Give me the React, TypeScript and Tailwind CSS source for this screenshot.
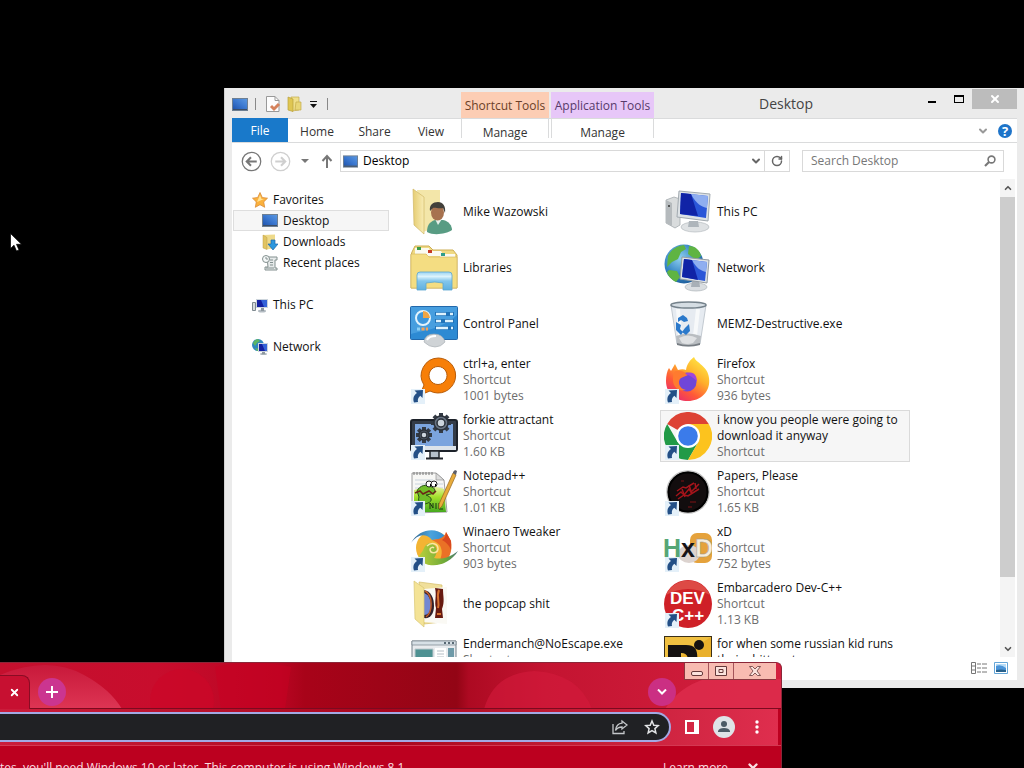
import React from 'react';
import { ChevronDown, RotateCw, X } from 'lucide-react';

type IconProps = { className?: string };

const ShortcutArrow = () => (
  <g>
    <rect x="1" y="33" width="14" height="15" fill="#e4f0f9" />
    <path d="M4 46.500c-1.500-4.500 0-7.500 3-9.500l-2.500-2.500L13 34l-.500 8-2.200-2.300C8 41.500 7.500 43.500 8 46z" fill="#234f86" />
  </g>
);

const MonitorIcon = ({ className }: IconProps) => (
  <svg viewBox="0 0 16 13" className={className} aria-hidden="true">
    <defs>
      <linearGradient id="screen" x1="0" y1="1" x2="1" y2="0">
        <stop offset="0" stopColor="#2055ae" />
        <stop offset=".5" stopColor="#3b78d0" />
        <stop offset="1" stopColor="#5a97e0" />
      </linearGradient>
    </defs>
    <rect x="0" y="0" width="16" height="13" fill="#6d7f92" />
    <rect x="1" y="1" width="14" height="10" fill="url(#screen)" />
    <path d="M1 11h14v1H1z" fill="#3b4d66" />
  </svg>
);

const UserFolderIcon = ({ className }: IconProps) => (
  <svg viewBox="0 0 48 48" className={className} aria-hidden="true">
    <defs>
      <linearGradient id="folder" x1="0" x2="1">
        <stop offset="0" stopColor="#e6cd73" />
        <stop offset="1" stopColor="#f8ecb4" />
      </linearGradient>
    </defs>
    <path d="M7 2h23v36L13 44z" fill="#f3e6a9" />
    <path d="M3 1l11 8v37L4 37z" fill="url(#folder)" stroke="#d0b766" strokeWidth=".7" />
    <path d="M17 44c0-6 2-10 8-12h8c6 1 9 6 9 10-6 4-18 6-25 2z" fill="#589c83" />
    <path d="M25 31l3 6 4-6z" fill="#e6efe9" />
    <ellipse cx="27.500" cy="24.500" rx="6.500" ry="8" fill="#a7724f" />
    <path d="M20 23c-1-6 3-9 8-9s8 4 7 11l-2-5c-4 1-9-1-10 0z" fill="#42403a" />
  </svg>
);

const LibrariesIcon = ({ className }: IconProps) => (
  <svg viewBox="0 0 48 48" className={className} aria-hidden="true">
    <defs>
      <linearGradient id="stand" x1="0" y1="0" x2="0" y2="1">
        <stop offset="0" stopColor="#9bd4f2" />
        <stop offset=".25" stopColor="#dcf3fc" />
        <stop offset=".5" stopColor="#83c6ec" />
        <stop offset="1" stopColor="#5fb0e0" />
      </linearGradient>
    </defs>
    <path d="M2 8l3-6h14l4 4h20l4 5v33H1V11z" fill="#f0da83" stroke="#cdae56" />
    <path d="M5 4h14l2 6H5zM17 7h14l3 5H17zM30 10h15v4H30z" fill="#fbfaf0" />
    <path d="M7 3h4v3H7z" fill="#3c9c47" />
    <path d="M18 6h4v3h-4z" fill="#c73a22" />
    <path d="M31 9h4v3h-4z" fill="#2f9d8b" />
    <path d="M1 10h15l3 3h28v31H1z" fill="#f4dd82" stroke="#d2b45b" strokeWidth=".6" />
    <path d="M7 46V31q0-3 3-3h29q3 0 3 3v15h-9v-7q-8-2-17 0v7z" fill="url(#stand)" stroke="#5ba6cf" strokeWidth=".8" />
  </svg>
);

const ControlPanelIcon = ({ className }: IconProps) => (
  <svg viewBox="0 0 48 48" className={className} aria-hidden="true">
    <rect x=".5" y="6.500" width="47" height="33" rx="1" fill="#2d8ad3" stroke="#2268ab" />
    <path d="M1 7h46v8C30 30 14 30 1 34z" fill="#53a7e4" opacity=".7" />
    <circle cx="13" cy="18" r="7" fill="#3e97dc" stroke="#e2f3fd" strokeWidth="2" />
    <path d="M13 18v-7q6 0 7 7z" fill="#f0a545" />
    <path d="M25 12h19v4H25zM25 19h19v4H25zM25 26h19v4H25z" fill="#2073b9" />
    <path d="M26 14h10m4 0h3M26 21h5m4 0h8M26 28h12m3 0h2" stroke="#ddf2fd" strokeWidth="2.500" />
    <path d="M7 29h3" stroke="#8fd0f5" strokeWidth="3" />
    <path d="M11.500 29h3M16 29h2" stroke="#f4a25a" strokeWidth="3" />
    <path d="M14 42q1-8 10-8t11 8q-4 5-10 5t-11-5z" fill="#cfd3d6" stroke="#a5abb0" strokeWidth=".6" />
    <path d="M17 40q2-4 9-4" stroke="#fff" strokeWidth="2" fill="none" />
  </svg>
);

const ComputerIcon = ({ className }: IconProps) => (
  <svg viewBox="0 0 48 48" className={className} aria-hidden="true">
    <path d="M2 12l8-3 6 2v26l-5 3-9-5z" fill="#d9dcdd" stroke="#a5abae" strokeWidth=".8" />
    <path d="M2 12l6 3v23l-6-3z" fill="#b5babd" />
    <circle cx="5" cy="18" r="1" fill="#333" />
    <ellipse cx="31" cy="39" rx="14" ry="5" fill="#dfe2e4" stroke="#b4babf" strokeWidth=".7" />
    <path d="M25 33h9l1 6H24z" fill="#aeb5bb" />
    <path d="M15 3l31 3-2 27-31-4z" fill="#dde2e6" stroke="#a2aab0" />
    <path d="M17 5l27 3-2 22-26-4z" fill="#2a56d8" />
    <path d="M27 6l17 2-1 12c-5-1-11-4-16-14z" fill="#8faef0" />
    <path d="M17 5l10 1 7 22-18-2z" fill="#1023a6" />
  </svg>
);

const SmallComputerIcon = ({ className }: IconProps) => (
  <svg viewBox="0 0 16 16" className={className} aria-hidden="true">
    <path d="M.500 5.500h3v8h-3z" fill="#d7dbdd" stroke="#7f8a90" />
    <ellipse cx="10" cy="14" rx="4" ry="1.500" fill="#b3bbc2" />
    <path d="M9 11h3v3H9z" fill="#8e989f" />
    <path d="M4 2h12v9H4z" fill="#cdd5dc" />
    <path d="M5 3h10v7H5z" fill="#3563d8" />
    <path d="M5 3h4l3 7H5z" fill="#1420a0" />
  </svg>
);

const SmallNetworkIcon = ({ className }: IconProps) => (
  <svg viewBox="0 0 16 16" className={className} aria-hidden="true">
    <circle cx="6" cy="6" r="6" fill="#2f87bd" />
    <path d="M1 4c1-2 3-4 5-4l2 2-3 2-2 3zM3 9l4 1v2H5z" fill="#5cb663" />
    <ellipse cx="11.500" cy="15" rx="3.500" ry="1" fill="#a9b2b9" />
    <path d="M10 12h3v3h-3z" fill="#8e989f" />
    <path d="M6 4h10v9H6z" fill="#cdd5dc" />
    <path d="M7 5h8v7H7z" fill="#3563d8" />
    <path d="M7 5h3l3 7H7z" fill="#1420a0" />
  </svg>
);

const NetworkIcon = ({ className }: IconProps) => (
  <svg viewBox="0 0 48 48" className={className} aria-hidden="true">
    <defs>
      <radialGradient id="globe" cx=".4" cy=".35" r=".7">
        <stop offset="0" stopColor="#8fd0f0" />
        <stop offset=".6" stopColor="#3585c4" />
        <stop offset="1" stopColor="#1b5b98" />
      </radialGradient>
    </defs>
    <circle cx="20" cy="20" r="19.500" fill="url(#globe)" />
    <path d="M4 12C8 4 14 2 20 1l2 4-5 3-3 7-6 3-5 5zM25 2c7 0 11 5 12 10l-5 4-8-6zM5 26l8 1 3 6-4 5C8 36 4 32 3 28z" fill="#5fb443" />
    <ellipse cx="32" cy="43" rx="11" ry="4" fill="#dadee1" stroke="#adb4b9" strokeWidth=".7" />
    <path d="M28 36h7l1 7h-9z" fill="#a8b0b7" />
    <path d="M18 13l27 3-2 23-27-4z" fill="#dde2e6" stroke="#949ca3" />
    <path d="M20 15l23 3-2 19-23-4z" fill="#2a56d8" />
    <path d="M28 16l15 2-1 10c-5-1-10-4-14-12z" fill="#8faef0" />
    <path d="M20 15l8 1 6 20-16-3z" fill="#1023a6" />
  </svg>
);

const RecycleBinIcon = ({ className }: IconProps) => (
  <svg viewBox="0 0 48 48" className={className} aria-hidden="true">
    <path d="M7 5h35l-6 39q-11 4-23 0z" fill="#e6ebf1" stroke="#c3cad1" />
    <path d="M14 9l2 27M34 9l-3 27" stroke="#fff" strokeWidth="4" opacity=".7" />
    <path d="M12 36q12-5 25 0l-1 8q-11 4-23 0z" fill="#b9bdc1" />
    <path d="M15 38q9-5 18 0l-4 5q-6 2-11 0z" fill="#dfe1e3" />
    <path d="M13 43q11 4 23 0v2q-12 3-23 0z" fill="#777d83" />
    <ellipse cx="24.500" cy="5" rx="17.500" ry="3" fill="#d5dde3" stroke="#75828b" strokeWidth="1.500" />
    <g fill="#2b79cb">
      <path d="M14 18l5-3 4 3 1 3-4 1-3-2-3 2z" />
      <path d="M12 22l5 3-1 4 3 3-2 3-5-5z" />
      <path d="M25 24l1 7-4 4-4-3 3-4z" />
    </g>
  </svg>
);

const OrangeRingIcon = ({ className }: IconProps) => (
  <svg viewBox="0 0 48 48" className={className} aria-hidden="true">
    <path fillRule="evenodd" d="M28.500 2a17.500 17.500 0 1 1-8.500 33L10 39l4-10A17.500 17.500 0 0 1 28.500 2zM28 10.500a9 9 0 1 0 .01 0z" fill="#f77f08" stroke="#b85c08" />
    <ShortcutArrow />
  </svg>
);

const Gear = ({ x, y, r }: { x: number; y: number; r: number }) => (
  <g transform={`translate(${x} ${y})`}>
    <g stroke="#333a44" strokeWidth="4">
      <path d={`M0 ${-r - 2}V${r + 2}M${-r - 2} 0H${r + 2}`} />
      <path d={`M0 ${-r - 2}V${r + 2}M${-r - 2} 0H${r + 2}`} transform="rotate(45)" />
    </g>
    <circle r={r - 1} fill="#6a7584" stroke="#2b313a" strokeWidth="1.500" />
    <circle r={r / 2} fill="#cdd5dd" stroke="#2b313a" strokeWidth="1.500" />
  </g>
);

const GearsMonitorIcon = ({ className }: IconProps) => (
  <svg viewBox="0 0 48 48" className={className} aria-hidden="true">
    <rect x="1" y="8" width="46" height="31" rx="2" fill="#343c48" stroke="#1d222a" strokeWidth="2" />
    <path d="M5 12h38v22H5z" fill="#7ba4de" />
    <path d="M2 34h44v4H2z" fill="#dce3ea" />
    <path d="M20 39h9v7h-9z" fill="#b6c0cb" stroke="#22262d" strokeWidth="1.500" />
    <path d="M16 46.500h17" stroke="#22262d" strokeWidth="2" />
    <Gear x={31} y={11} r={8} />
    <Gear x={14} y={23} r={6} />
    <ShortcutArrow />
  </svg>
);

const NotepadIcon = ({ className }: IconProps) => (
  <svg viewBox="0 0 48 48" className={className} aria-hidden="true">
    <defs>
      <linearGradient id="grass" x1="0" y1="0" x2="0" y2="1">
        <stop offset="0" stopColor="#e8f3a0" />
        <stop offset=".4" stopColor="#a4e02c" />
        <stop offset="1" stopColor="#45a81e" />
      </linearGradient>
    </defs>
    <path d="M2 5h24l8 7 3 32-35 1z" fill="#f7f7f5" stroke="#888" strokeWidth=".8" />
    <path d="M4 4v3M7 4v3M10 4v3M13 4v3M16 4v3M19 4v3M22 4v3" stroke="#777" />
    <path d="M5 12h18M5 16h28M5 20h28" stroke="#c8d3dd" />
    <path d="M26 5v7h8z" fill="#ddd" stroke="#888" strokeWidth=".6" />
    <path d="M4 22c12-4 21-4 30-1l2 23H4z" fill="url(#grass)" />
    <path d="M7 23c3-6 9-7 15-4 4 2 4 6-1 7l-5 1c6 2 7 6 2 8-6 3-11-1-9-6z" fill="#6fbd28" stroke="#28501a" />
    <circle cx="19" cy="16" r="3" fill="#fff" stroke="#222" />
    <circle cx="24" cy="16" r="3" fill="#fff" stroke="#222" />
    <path d="M20 17h1M25 17h1" stroke="#000" strokeWidth="2" />
    <path d="M5 25l5-2 3 3 6-3 4 3 3-3" stroke="#6c2516" fill="none" strokeWidth="1.500" />
    <path d="M20 41v-6l3 5v-5m3 0v6m3-6v6h4" stroke="#1c3513" fill="none" />
    <path d="M43 5l3 2-14 31-3 3v-5z" fill="#e8ac3c" stroke="#95651d" strokeWidth=".7" />
    <path d="M43 4l2-2 2 1-1 4-3-2z" fill="#5c5e68" />
    <ShortcutArrow />
  </svg>
);

const TweakerIcon = ({ className }: IconProps) => (
  <svg viewBox="0 0 48 48" className={className} aria-hidden="true">
    <defs>
      <linearGradient id="swirlBlue" x1="0" x2="1">
        <stop offset="0" stopColor="#2d5f86" />
        <stop offset=".5" stopColor="#4ba3dc" />
        <stop offset="1" stopColor="#2b86cc" />
      </linearGradient>
      <linearGradient id="swirlGreen" x1="0" x2="1">
        <stop offset="0" stopColor="#b9cf3b" />
        <stop offset=".7" stopColor="#6aa839" />
        <stop offset="1" stopColor="#47757b" />
      </linearGradient>
    </defs>
    <circle cx="23" cy="24" r="17" fill="#f3b433" />
    <path d="M1 19C9 5 25 3 34 11c6 4 7 10 5 14-3-7-9-11-17-9C15 8 7 11 1 19z" fill="url(#swirlBlue)" />
    <path d="M36 8l5 9c2 10-2 20-10 23-4-1 3-9 0-16-1-4-5-6-9-8 6-1 12-1 14-8z" fill="#ea7126" />
    <path d="M36 8l5 9v9c-2-5-5-8-9-10 3-2 4-4 4-8z" fill="#d9481f" />
    <path d="M14 24c2-5 7-6 10-3 4 3 3 9 0 13 9 2 16-1 24-7C39 42 18 46 9 35c-2-3 3-5 5-11z" fill="url(#swirlGreen)" />
    <path d="M17 22c4-4 11-3 11 3-1 5-8 5-8 0 1-2 3-2 4-1" fill="none" stroke="#fbe7a3" strokeWidth="1.500" />
    <ShortcutArrow />
  </svg>
);

const PopcapFolderIcon = ({ className }: IconProps) => (
  <svg viewBox="0 0 48 48" className={className} aria-hidden="true">
    <path d="M9 2l23 3v37l-18 2z" fill="#f0df9b" stroke="#d4bd68" strokeWidth=".7" />
    <path d="M14 9l23-2v37l-23-2z" fill="#faf9f4" />
    <path d="M14 10c7 1 10 8 10 16s-4 13-10 12z" fill="#32202a" />
    <path d="M14 13c6 2 7 9 7 14-1 5-3 8-7 8z" fill="#7288d2" />
    <path d="M15 11c8 4 8 21 1 26" stroke="#c45c28" fill="none" strokeWidth="1.500" />
    <path d="M25 8l8 1c0 8 2 12-1 20l1 9h-8l1-10c-2-6 1-12-1-20z" fill="#671a10" />
    <path d="M29 10c-3 7 1 12-1 18M27 34h4" stroke="#d8722f" strokeWidth="2" fill="none" />
    <path d="M4 1l10 7v39L5 39z" fill="#f4e396" stroke="#d9c573" strokeWidth=".7" />
  </svg>
);

const AppWindowIcon = ({ className }: IconProps) => (
  <svg viewBox="0 0 48 48" className={className} aria-hidden="true">
    <path d="M2 5h44v40H2z" fill="#e8ebee" stroke="#75818a" />
    <path d="M2 5h44v4H2z" fill="#d7e0e6" stroke="#75818a" strokeWidth=".7" />
    <path d="M34 7h2m2 0h2m2 0h2" stroke="#586974" strokeWidth="2" />
    <path d="M5 13h18v27H5z" fill="#4e9192" stroke="#bcc7cc" />
    <path d="M25 12h11v30H25z" fill="#fff" />
    <path d="M27 15h7m-7 3h7m-7 3h7" stroke="#b5bec5" />
    <path d="M38 12h6v30h-6z" fill="#6e9aa8" />
  </svg>
);

const FirefoxIcon = ({ className }: IconProps) => (
  <svg viewBox="0 0 48 48" className={className} aria-hidden="true">
    <defs>
      <linearGradient id="fox" x1=".9" y1="0" x2=".2" y2="1">
        <stop offset="0" stopColor="#fff14a" />
        <stop offset=".4" stopColor="#ffb02b" />
        <stop offset=".7" stopColor="#ff5a37" />
        <stop offset="1" stopColor="#e72675" />
      </linearGradient>
    </defs>
    <path d="M30 1c2 6 14 9 15 21 2 14-9 23-21 23C11 45 2 37 2 25c0-5 1-10 3-13l2 3 4-7 3 6c3-1 6-1 8 0 1-6 4-10 8-13z" fill="url(#fox)" />
    <circle cx="23" cy="26" r="9.500" fill="#7046d8" />
    <path d="M11 15c6-1 9 0 13 4l-7 3c-4 3-2 11 5 12-7 2-13-3-13-10 0-4 0-7 2-9z" fill="#ff7b2f" />
    <path d="M21 18c8-4 12 1 12 8-3-4-6-6-12-8z" fill="#a045dd" />
    <ShortcutArrow />
  </svg>
);

const ChromeIcon = ({ className }: IconProps) => (
  <svg viewBox="0 0 48 48" className={className} aria-hidden="true">
    <path d="M24 24L3.200 12A24 24 0 0 1 44.800 12z" fill="#dd4234" />
    <path d="M3.200 12L13.600 30 34.400 30 24 48A24 24 0 0 1 3.200 12z" fill="#229a47" />
    <path d="M34.400 30L24 48a24 24 0 0 0 20.800-36H24z" fill="#fcc31e" />
    <circle cx="24" cy="24" r="12" fill="#fff" />
    <circle cx="24" cy="24" r="9.800" fill="#3b7bea" />
    <ShortcutArrow />
  </svg>
);

const PapersIcon = ({ className }: IconProps) => (
  <svg viewBox="0 0 48 48" className={className} aria-hidden="true">
    <circle cx="24" cy="24" r="21" fill="#120d0e" stroke="#c3c3c3" strokeWidth="1.500" />
    <circle cx="24" cy="24" r="19.500" fill="none" stroke="#000" strokeWidth="2" />
    <g stroke="#a5141b" strokeWidth="1.500" fill="none">
      <path d="M12 28l5-4 3 3 5-6 2 3 8-8" />
      <path d="M13 23l6-4 3 1 8-5M14 31l6-4 4 1 11-7" />
      <path d="M18 21l3 8M25 17l3 9M31 15l1 6" />
    </g>
    <path d="M26 34h6M24 39h4M17 13h3" stroke="#5b1013" strokeWidth="1.500" />
    <ShortcutArrow />
  </svg>
);

const HxdIcon = ({ className }: IconProps) => (
  <svg viewBox="0 0 48 48" className={className} aria-hidden="true">
    <rect x="26" y="9" width="22" height="30" rx="7" fill="#e5a23c" />
    <ellipse cx="25" cy="30" rx="11" ry="9" fill="#dcd3cf" />
    <text x="-1" y="33" fontSize="25" fontWeight="700" fontFamily="Liberation Sans, sans-serif">
      <tspan fill="#56a676">H</tspan>
      <tspan fill="#171417">x</tspan>
      <tspan fill="#f6eddb" stroke="#98938c" strokeWidth=".5">D</tspan>
    </text>
    <ShortcutArrow />
  </svg>
);

const DevCppIcon = ({ className }: IconProps) => (
  <svg viewBox="0 0 48 48" className={className} aria-hidden="true">
    <circle cx="24" cy="24" r="24" fill="#cf2027" />
    <path d="M2 15a24 24 0 0 1 44 0C32 7 16 7 2 15z" fill="#dd4a45" />
    <text fontSize="17" fontWeight="700" fontFamily="Liberation Sans, sans-serif" fill="#fff">
      <tspan x="6" y="24">DEV</tspan>
      <tspan x="8" y="41">C++</tspan>
    </text>
    <ShortcutArrow />
  </svg>
);

const YellowAppIcon = ({ className }: IconProps) => (
  <svg viewBox="0 0 48 48" className={className} aria-hidden="true">
    <rect x=".5" y=".5" width="47" height="47" fill="#e9b02c" stroke="#3b3018" />
    <path d="M1 1h46L1 30z" fill="#f7cf55" opacity=".5" />
    <path fillRule="evenodd" d="M4 9h18c11 0 12 7 11 17s-8 17-18 17H4zM17 17v17c5 0 7-3 7-9s-2-8-7-8z" fill="#151211" />
    <circle cx="35" cy="9" r="5" fill="#151211" />
  </svg>
);

const StarIcon = ({ className }: IconProps) => (
  <svg viewBox="0 0 16 16" className={className} aria-hidden="true">
    <path d="M8 .5l2.300 5 5.200.7-3.800 3.700 1 5.400L8 12.700l-4.700 2.600 1-5.400L.5 6.200l5.200-.7z" fill="#fbb13c" stroke="#d98d3a" strokeWidth=".8" />
    <path d="M8 3l1.500 4H12L5 10z" fill="#ffe296" />
  </svg>
);

const DownloadsIcon = ({ className }: IconProps) => (
  <svg viewBox="0 0 16 16" className={className} aria-hidden="true">
    <path d="M1 1l12-.500V14l-8 1.500z" fill="#eeda8b" />
    <path d="M1 1l4 2.500v12L1 14z" fill="#e1c462" stroke="#bc9e44" strokeWidth=".5" />
    <path d="M9 6h4v4h3l-5 6-5-6h3z" fill="#2c97de" stroke="#1c65aa" strokeWidth=".7" />
  </svg>
);

const RecentIcon = ({ className }: IconProps) => (
  <svg viewBox="0 0 16 16" className={className} aria-hidden="true">
    <path d="M5 2h10v3h-2v8h2v2H3v-3h3z" fill="#e6eaea" stroke="#83908f" />
    <path d="M8 5h3M8 7.500h3M8 10h3M4 13h8" stroke="#83908f" />
    <circle cx="4" cy="4" r="3.500" fill="#f5f8f8" stroke="#83908f" />
    <path d="M4 2v2h2" fill="none" stroke="#83908f" />
  </svg>
);

const DocCheckIcon = ({ className }: IconProps) => (
  <svg viewBox="0 0 16 16" className={className} aria-hidden="true">
    <path d="M1.500.5H10l4 4v11H1.500z" fill="#fdfdfd" stroke="#999" />
    <path d="M10 .5v4h4" fill="none" stroke="#999" />
    <path d="M6 10l3 3 5-5" fill="none" stroke="#d5825c" strokeWidth="3" />
  </svg>
);

const SmallFolderIcon = ({ className }: IconProps) => (
  <svg viewBox="0 0 16 16" className={className} aria-hidden="true">
    <path d="M4 1h8v13l-7 1z" fill="#efdf8b" stroke="#c4ac4a" strokeWidth=".7" />
    <path d="M9 6h5v8H8z" fill="#e8d677" stroke="#c4ac4a" strokeWidth=".7" />
    <path d="M1 1l5 2v12.500L1 14z" fill="#dfc652" stroke="#b9a03c" strokeWidth=".7" />
  </svg>
);

const ArrowCircle = ({ className, flip }: IconProps & { flip?: boolean }) => (
  <svg viewBox="0 0 20 20" className={className} fill="none" stroke="currentColor" aria-hidden="true">
    <circle cx="10" cy="10" r="8.800" strokeWidth="1.200" />
    <path d={flip ? 'M5 10h9M10.500 6l4 4-4 4' : 'M15 10H6M9.500 6l-4 4 4 4'} strokeWidth="2" />
  </svg>
);

type FileItem = {
  name: string;
  icon: React.ComponentType<IconProps>;
  details?: string[];
  hovered?: boolean;
};

const files: FileItem[] = [
  { name: 'Mike Wazowski', icon: UserFolderIcon },
  { name: 'This PC', icon: ComputerIcon },
  { name: 'Libraries', icon: LibrariesIcon },
  { name: 'Network', icon: NetworkIcon },
  { name: 'Control Panel', icon: ControlPanelIcon },
  { name: 'MEMZ-Destructive.exe', icon: RecycleBinIcon },
  { name: 'ctrl+a, enter', icon: OrangeRingIcon, details: ['Shortcut', '1001 bytes'] },
  { name: 'Firefox', icon: FirefoxIcon, details: ['Shortcut', '936 bytes'] },
  { name: 'forkie attractant', icon: GearsMonitorIcon, details: ['Shortcut', '1.60 KB'] },
  { name: 'i know you people were going to download it anyway', icon: ChromeIcon, details: ['Shortcut'], hovered: true },
  { name: 'Notepad++', icon: NotepadIcon, details: ['Shortcut', '1.01 KB'] },
  { name: 'Papers, Please', icon: PapersIcon, details: ['Shortcut', '1.65 KB'] },
  { name: 'Winaero Tweaker', icon: TweakerIcon, details: ['Shortcut', '903 bytes'] },
  { name: 'xD', icon: HxdIcon, details: ['Shortcut', '752 bytes'] },
  { name: 'the popcap shit', icon: PopcapFolderIcon },
  { name: 'Embarcadero Dev-C++', icon: DevCppIcon, details: ['Shortcut', '1.13 KB'] },
  { name: 'Endermanch@NoEscape.exe', icon: AppWindowIcon, details: ['Shortcut', '1.22 KB'] },
  { name: 'for when some russian kid runs their shitty rat', icon: YellowAppIcon, details: ['Shortcut'] },
];

const FileTile = ({ item }: { item: FileItem }) => {
  const Icon = item.icon;
  return (
    <button
      className={`flex h-[52px] w-[250px] items-center border px-[3px] text-left ${
        item.hovered ? 'border-[#dadada] bg-[#f6f6f6]' : 'border-transparent'
      }`}
    >
      <Icon className="mr-[5px] h-12 w-12 shrink-0" />
      <span className="text-xs leading-4">
        <span className="block">{item.name}</span>
        {item.details?.map((line) => (
          <span key={line} className="block text-[#6d6d6d]">{line}</span>
        ))}
      </span>
    </button>
  );
};

const SideItem = ({ label, icon: Icon, nested, selected, iconClass = 'h-4 w-4' }: {
  label: string;
  icon: React.ComponentType<IconProps>;
  nested?: boolean;
  selected?: boolean;
  iconClass?: string;
}) => (
  <button
    className={`flex h-[21px] w-full items-center gap-[5px] border text-left text-xs ${nested ? 'pl-7' : 'pl-[18px]'} ${
      selected ? 'border-[#dedede] bg-[#f6f6f6]' : 'border-transparent'
    }`}
  >
    <Icon className={iconClass} />
    {label}
  </button>
);

const Explorer = () => (
  <section className="absolute top-[88px] right-0 bottom-[80px] left-[224px] flex flex-col border-l border-[#d2d2d2] bg-[#ebebeb] pr-[7px] pb-2 pl-[7px] text-[#111]">
    <header className="flex h-[30px] shrink-0">
      <div className="flex w-[229px] shrink-0 items-center pt-[2px]">
        <MonitorIcon className="h-[13px] w-4" />
        <span className="ml-[7px] h-3 w-px bg-[#888]" />
        <button aria-label="Properties" className="ml-[9px]"><DocCheckIcon className="h-4 w-4" /></button>
        <button aria-label="New folder" className="ml-[6px]"><SmallFolderIcon className="h-4 w-4" /></button>
        <button aria-label="Customize toolbar" className="ml-[7px]">
          <svg viewBox="0 0 7 7" className="h-[7px] w-[7px]"><path d="M0 0h7v1H0zM0 3h7L3.500 7z" fill="#111" /></svg>
        </button>
        <span className="ml-[10px] h-3 w-px bg-[#888]" />
      </div>
      <div className="mt-1 mr-[2px] flex w-[88px] shrink-0 items-center justify-center bg-[#fccdb4] pt-[2px] text-xs whitespace-nowrap text-[#6b3f28]">Shortcut Tools</div>
      <div className="mt-1 flex w-[103px] shrink-0 items-center justify-center bg-[#e7c7f8] pt-[2px] text-xs whitespace-nowrap text-[#573a6b]">Application Tools</div>
      <h1 className="flex-1 pt-1 text-center text-sm leading-6 text-[#444]">Desktop</h1>
      <div className="flex h-[21px] shrink-0 pt-px">
        <button aria-label="Minimize" className="flex w-[27px] items-center justify-center">
          <span className="mt-[6px] h-[2px] w-2 bg-black" />
        </button>
        <button aria-label="Maximize" className="flex w-[27px] items-center justify-center">
          <span className="h-2 w-[10px] border border-t-2 border-black" />
        </button>
        <button aria-label="Close" className="flex w-[45px] items-center justify-center bg-[#bcbcbc] text-white">
          <X className="h-3 w-3" strokeWidth={4} />
        </button>
      </div>
    </header>

    <nav className="flex h-[25px] shrink-0 border-t border-b border-[#dadbdc] bg-white text-xs text-[#333]">
      <div className="flex w-[229px] shrink-0">
        <button className="-mt-px w-14 bg-[#1979ca] pt-px text-white">File</button>
        <button className="w-[58px] pt-[2px]">Home</button>
        <button className="w-[57px] pt-[2px]">Share</button>
        <button className="w-[56px] pt-[2px]">View</button>
      </div>
      <button className="mr-[2px] mb-1 w-[88px] border-x border-[#dadbdc] pt-[6px]">Manage</button>
      <button className="mb-1 w-[103px] border-x border-[#dadbdc] pt-[6px]">Manage</button>
      <div className="ml-auto flex items-center gap-[9px] pr-[5px]">
        <button aria-label="Expand ribbon"><ChevronDown className="h-3 w-3 text-[#999]" strokeWidth={4} /></button>
        <button aria-label="Help" className="h-[14px] w-[14px] rounded-full bg-[#1e74c9] text-[13px] leading-[14px] font-bold text-white">?</button>
      </div>
    </nav>

    <div className="flex h-9 shrink-0 items-center bg-white pr-[13px] pl-[9px] text-[#666]">
      <button aria-label="Back" className="text-[#777]"><ArrowCircle className="h-[21px] w-[21px]" /></button>
      <button aria-label="Forward" className="ml-2 text-[#cfcfcf]"><ArrowCircle flip className="h-[21px] w-[21px]" /></button>
      <button aria-label="Recent locations" className="ml-[10px]">
        <svg viewBox="0 0 8 4" className="h-1 w-2"><path d="M0 0h8L4 4z" fill="#777" /></svg>
      </button>
      <button aria-label="Up" className="ml-3">
        <svg viewBox="0 0 12 14" className="h-[14px] w-3" fill="none" stroke="#777" strokeWidth="2"><path d="M6 14V2M1.500 7L6 2l4.500 5" /></svg>
      </button>
      <div className="ml-[7px] flex h-[22px] flex-1 border border-[#d9d9d9]">
        <button className="flex flex-1 items-center gap-[5px] pl-[2px] text-xs text-black">
          <MonitorIcon className="h-[13px] w-[15px]" />
          Desktop
        </button>
        <button aria-label="Previous locations" className="flex w-[17px] items-center justify-center"><ChevronDown className="h-3 w-3" strokeWidth={4} /></button>
        <button aria-label="Refresh" className="flex w-[25px] items-center justify-center border-l border-[#d9d9d9]"><RotateCw className="h-3 w-3" strokeWidth={3} /></button>
      </div>
      <label className="ml-3 flex h-[22px] w-[202px] items-center border border-[#d9d9d9] pr-[7px] pl-2">
        <input type="text" aria-label="Search Desktop" placeholder="Search Desktop" className="min-w-0 flex-1 text-xs outline-none placeholder:text-[#777]" />
        <svg viewBox="0 0 12 12" className="h-3 w-3" fill="none" stroke="#777"><circle cx="7.500" cy="4.500" r="3.400" strokeWidth="1.600" /><path d="M5 7l-4 4" strokeWidth="2.200" /></svg>
      </label>
    </div>

    <div className="flex min-h-0 flex-1 bg-white">
      <aside className="w-[157px] shrink-0 pt-[10px] pl-px">
        <SideItem label="Favorites" icon={StarIcon} />
        <SideItem label="Desktop" icon={MonitorIcon} iconClass="h-[13px] w-4" nested selected />
        <SideItem label="Downloads" icon={DownloadsIcon} nested />
        <SideItem label="Recent places" icon={RecentIcon} nested />
        <div className="pt-[21px]"><SideItem label="This PC" icon={SmallComputerIcon} /></div>
        <div className="pt-[21px]"><SideItem label="Network" icon={SmallNetworkIcon} /></div>
      </aside>
      <div className="flex min-w-0 flex-1 flex-wrap content-start gap-1 overflow-hidden pt-[7px] pl-[17px]">
        {files.map((item) => <FileTile key={item.name} item={item} />)}
      </div>
      <div className="mr-[2px] flex w-[15px] shrink-0 flex-col items-center bg-[#f4f4f4]">
        <button aria-label="Scroll up" className="h-[18px]"><ChevronDown className="h-[10px] w-[10px] rotate-180 text-[#555]" strokeWidth={4} /></button>
        <div className="h-[380px] w-full bg-[#cdcdcd]" />
        <button aria-label="Scroll down" className="mt-auto h-4"><ChevronDown className="h-[10px] w-[10px] text-[#555]" strokeWidth={4} /></button>
      </div>
    </div>

    <footer className="flex h-[23px] shrink-0 items-start justify-end gap-[7px] bg-white pt-[5px] pr-[9px]">
      <button aria-label="Details view">
        <svg viewBox="0 0 16 12" className="h-3 w-4" fill="none" stroke="#777"><path d="M.5.500h4v11h-4zM.5 4h4M.5 8h4" /><path d="M6 2h4m1 0h5M6 6h4m1 0h5M6 10h4m1 0h5" /></svg>
      </button>
      <button aria-label="Large icons view">
        <svg viewBox="0 0 14 12" className="h-3 w-[14px]"><path d="M.5.500h13v11H.5z" fill="#fff" stroke="#65a6d8" /><path d="M2 2h10v8H2z" fill="#4b94d8" /><path d="M2 4q5-2 10 2V2H2z" fill="#b6dcf7" /><path d="M2 8q5-1 10 0v2H2z" fill="#27618c" /></svg>
      </button>
    </footer>
  </section>
);

const CaptionButtons = () => (
  <div className="absolute top-0 right-[5px] flex h-[17px] border-b border-l border-[#8c3940] bg-[#f8bbb1]">
    <button aria-label="Minimize" className="flex w-6 items-center justify-center border-r border-[#a5545a] pt-1">
      <span className="h-[5px] w-3 rounded-[2px] border border-[#65393a] bg-[#fbe3de]" />
    </button>
    <button aria-label="Restore" className="flex w-[25px] items-center justify-center border-r border-[#a5545a]">
      <svg viewBox="0 0 12 10" className="h-[10px] w-3" fill="#fbe3de" stroke="#65393a"><path d="M.5.500h11v9H.5zM4 3.500h4v3H4z" /></svg>
    </button>
    <button aria-label="Close" className="flex w-[42px] items-center justify-center">
      <svg viewBox="0 0 12 10" className="h-[10px] w-3" fill="#fbe3de" stroke="#65393a" strokeWidth=".8"><path d="M.5.500h3L6 3 8.500.5h3L8 5l3.500 4.500h-3L6 7 3.500 9.500h-3L4 5z" /></svg>
    </button>
  </div>
);

const ThemeBackdrop = () => (
  <svg viewBox="0 0 781 46" preserveAspectRatio="none" className="absolute inset-0 h-full w-full" aria-hidden="true">
    <defs>
      <linearGradient id="theme" x1="0" x2="1">
        <stop offset="0" stopColor="#c4102e" />
        <stop offset=".2" stopColor="#c80d2d" />
        <stop offset=".36" stopColor="#b80522" />
        <stop offset=".39" stopColor="#a80319" />
        <stop offset=".585" stopColor="#930515" />
        <stop offset=".6" stopColor="#ad0a22" />
        <stop offset=".7" stopColor="#c41431" />
        <stop offset="1" stopColor="#d3203f" />
      </linearGradient>
      <linearGradient id="bubble" x1="0" y1="0" x2="0" y2="1">
        <stop offset="0" stopColor="#c8193a" />
        <stop offset="1" stopColor="#de3554" />
      </linearGradient>
    </defs>
    <path d="M0 0h781v46H0z" fill="url(#theme)" />
    <path d="M0 12Q48-8 84 12q26 14 38 34H0z" fill="url(#bubble)" />
    <circle cx="182" cy="38" r="32" fill="#cc0728" opacity=".7" />
    <path d="M215 4q40-8 76 0l-6 42h-64z" fill="#c90022" opacity=".5" />
    <path d="M484 46q10-36 50-38 44 2 58 38z" fill="#d41a3c" opacity=".6" />
    <path d="M665 46q14-22 40-30h76v30z" fill="#df2d4e" opacity=".8" />
    <path d="M30 45.500h751" stroke="#7c0a1f" />
  </svg>
);

const Browser = () => (
  <section className="absolute right-[242px] bottom-0 left-0 h-[106px] overflow-hidden rounded-tr-md border-t border-r border-[#8b2638] bg-[#bc001f] text-white">
    <div className="relative h-[46px]">
      <ThemeBackdrop />
      <div className="relative flex h-full items-center">
        <div className="mt-3 flex h-[34px] w-[30px] items-center justify-center self-start rounded-tr-lg border-t border-r border-[#8a0c24] bg-[#c71031]">
          <button aria-label="Close tab"><X className="h-[11px] w-[11px]" strokeWidth={4} /></button>
        </div>
        <button aria-label="New tab" className="mt-3 ml-2 flex h-7 w-7 items-center justify-center rounded-full bg-[#cb3590]">
          <svg viewBox="0 0 12 12" className="h-3 w-3" stroke="#fff" strokeWidth="2"><path d="M6 0v12M0 6h12" /></svg>
        </button>
        <button aria-label="Search tabs" className="mt-3 mr-[105px] ml-auto flex h-7 w-7 items-center justify-center rounded-full bg-[#cb2f83]">
          <svg viewBox="0 0 10 6" className="h-[6px] w-[10px]" fill="none" stroke="#fff" strokeWidth="2"><path d="M1 .500l4 4 4-4" /></svg>
        </button>
      </div>
      <CaptionButtons />
    </div>

    <div className="mr-[3px] flex h-9 items-center bg-linear-to-r from-[#cb1c3b] via-[#a9051d] to-[#df2e4e] pr-[19px]">
      <div className="flex h-[30px] flex-1 items-center rounded-r-full border-2 border-l-0 border-[#a3a9e4] bg-[#202124] pr-[9px]">
        <input type="text" aria-label="Address and search bar" className="min-w-0 flex-1 text-sm outline-none" />
        <button aria-label="Share this page">
          <svg viewBox="0 0 16 16" className="h-4 w-4" fill="none" stroke="#c4c7ca" strokeWidth="1.300"><path d="M1 5v9.500h11V12" /><path d="M10 2l5 4-5 4V8C7 8 5 9 3.500 11.500 4 7 6.500 4.500 10 4.200z" /></svg>
        </button>
        <button aria-label="Bookmark this tab" className="ml-4">
          <svg viewBox="0 0 16 16" className="h-4 w-4" fill="none" stroke="#e2e4e6" strokeWidth="1.500"><path d="M8 2l1.800 4.200 4.500.4-3.400 3 1 4.400L8 11.700 4.100 14l1-4.400-3.400-3 4.500-.4z" /></svg>
        </button>
      </div>
      <button aria-label="Side panel" className="ml-[14px]">
        <svg viewBox="0 0 14 14" className="h-[14px] w-[14px]"><path d="M1 1h12v12H1z" fill="none" stroke="#fff" strokeWidth="2" /><path d="M9 0h5v14H9z" fill="#fff" /></svg>
      </button>
      <button aria-label="Profile" className="ml-[14px]">
        <svg viewBox="0 0 22 22" className="h-[22px] w-[22px]"><circle cx="11" cy="11" r="11" fill="#dfe3e7" /><circle cx="11" cy="8" r="3" fill="#4c5b66" /><path d="M5 16v-1q1-3 6-3t6 3v1z" fill="#4c5b66" /></svg>
      </button>
      <button aria-label="Menu" className="ml-5">
        <svg viewBox="0 0 4 14" className="h-[14px] w-1" fill="#fff"><circle cx="2" cy="2" r="1.700" /><circle cx="2" cy="7" r="1.700" /><circle cx="2" cy="12" r="1.700" /></svg>
      </button>
    </div>

    <div className="flex items-center border-t border-[#d43852] pt-3 pr-[21px] text-xs leading-5 whitespace-nowrap text-[#f8dfe2]">
      <p>tes, you'll need Windows 10 or later. This computer is using Windows 8.1.</p>
      <a href="#" className="mr-[18px] ml-auto">Learn more</a>
      <button aria-label="Dismiss"><X className="h-[14px] w-[14px]" strokeWidth={4} /></button>
    </div>
  </section>
);

const Pointer = () => (
  <svg viewBox="0 0 12 19" className="absolute top-[233px] left-[10px] h-[19px] w-3" aria-hidden="true">
    <path d="M.5.500v15l3.500-3.300 2.500 5.800 2.500-1.100-2.500-5.600h5z" fill="#fff" stroke="#000" strokeWidth=".7" />
  </svg>
);

export default function App() {
  return (
    <main className="relative h-screen overflow-hidden bg-black font-['Open_Sans','Noto_Sans',sans-serif]">
      <Explorer />
      <Browser />
      <Pointer />
    </main>
  );
}
